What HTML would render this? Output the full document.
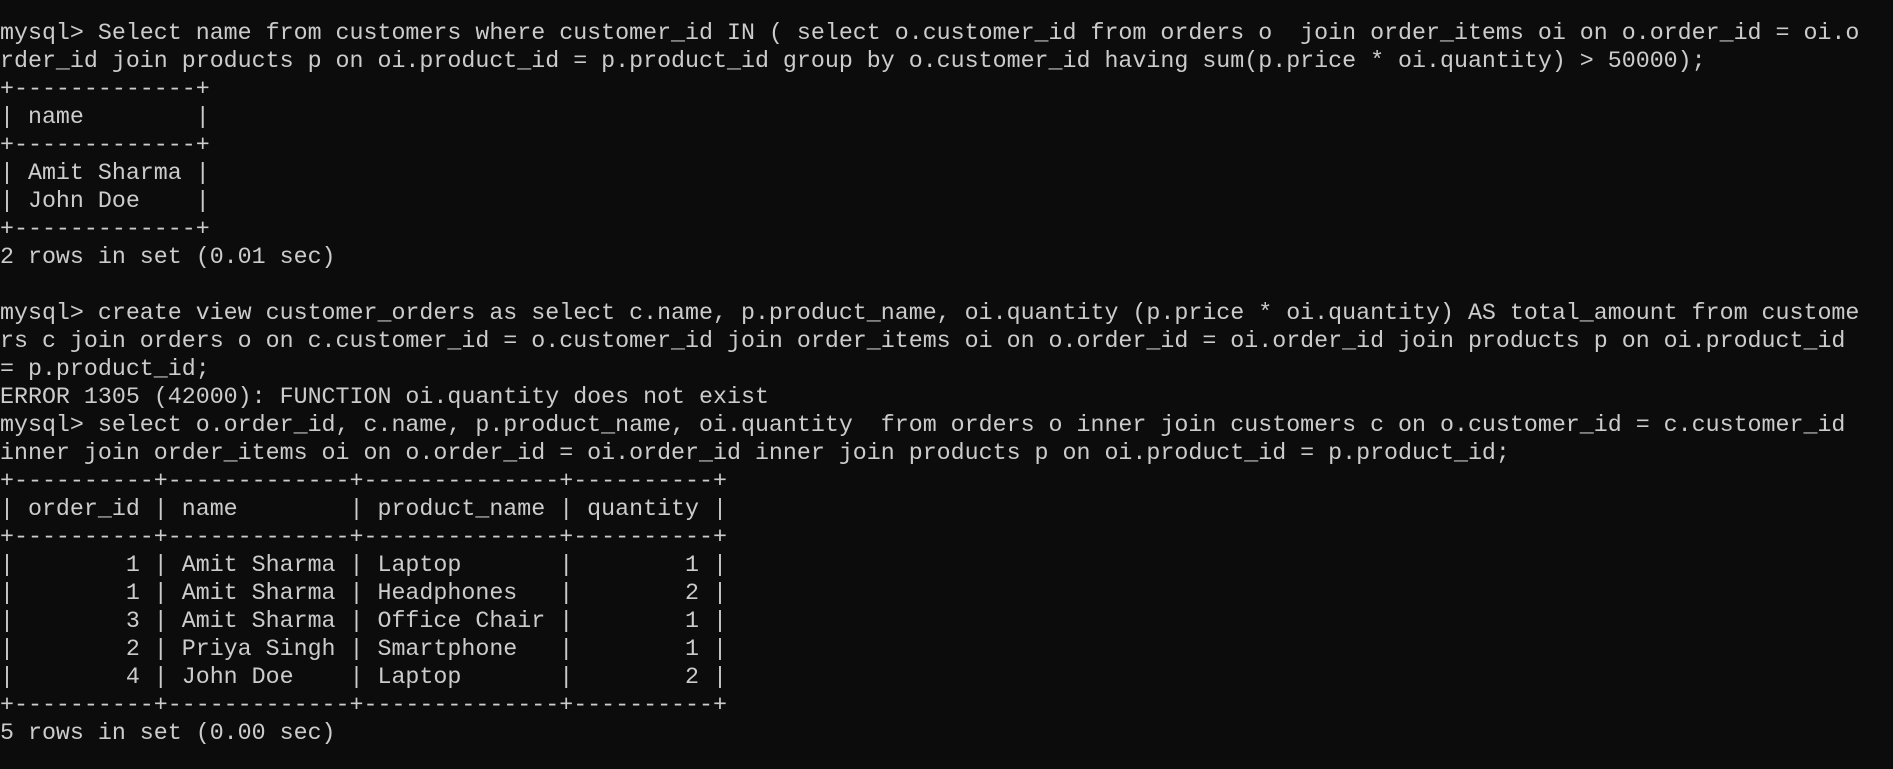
<!DOCTYPE html>
<html><head><meta charset="utf-8"><style>
html,body{margin:0;padding:0;background:#0c0c0c;width:1893px;height:769px;overflow:hidden}
pre{margin:0;padding:19px 0 0 0;font-family:"Liberation Mono",monospace;font-size:23.3px;line-height:28px;color:#cccccc;white-space:pre}
</style></head><body><pre>mysql&gt; Select name from customers where customer_id IN ( select o.customer_id from orders o  join order_items oi on o.order_id = oi.o
rder_id join products p on oi.product_id = p.product_id group by o.customer_id having sum(p.price * oi.quantity) &gt; 50000);
+-------------+
| name        |
+-------------+
| Amit Sharma |
| John Doe    |
+-------------+
2 rows in set (0.01 sec)

mysql&gt; create view customer_orders as select c.name, p.product_name, oi.quantity (p.price * oi.quantity) AS total_amount from custome
rs c join orders o on c.customer_id = o.customer_id join order_items oi on o.order_id = oi.order_id join products p on oi.product_id
= p.product_id;
ERROR 1305 (42000): FUNCTION oi.quantity does not exist
mysql&gt; select o.order_id, c.name, p.product_name, oi.quantity  from orders o inner join customers c on o.customer_id = c.customer_id
inner join order_items oi on o.order_id = oi.order_id inner join products p on oi.product_id = p.product_id;
+----------+-------------+--------------+----------+
| order_id | name        | product_name | quantity |
+----------+-------------+--------------+----------+
|        1 | Amit Sharma | Laptop       |        1 |
|        1 | Amit Sharma | Headphones   |        2 |
|        3 | Amit Sharma | Office Chair |        1 |
|        2 | Priya Singh | Smartphone   |        1 |
|        4 | John Doe    | Laptop       |        2 |
+----------+-------------+--------------+----------+
5 rows in set (0.00 sec)</pre></body></html>
